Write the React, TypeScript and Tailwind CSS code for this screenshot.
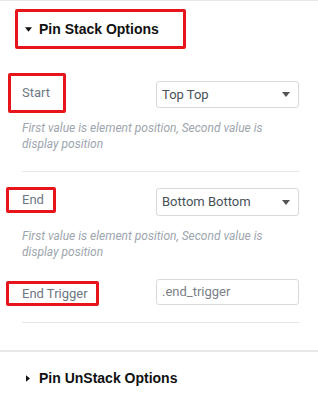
import React from "react";

const DownCaret = ({ className }: { className?: string }) => (
  <svg width="8" height="5" viewBox="0 0 8 5" className={className}>
    <path d="M0 0 L8 0 L4 5 Z" fill="currentColor" />
  </svg>
);

const RightCaret = ({ className }: { className?: string }) => (
  <svg width="5" height="8" viewBox="0 0 5 8" className={className}>
    <path d="M0 0 L5 4 L0 8 Z" fill="currentColor" />
  </svg>
);

export default function App() {
  return (
    <div className="w-[318px] h-[418px] bg-white border-t border-[#e6e8ea] font-['Roboto',sans-serif] overflow-hidden">
      {/* Heading */}
      <div className="pt-[8px] pl-[15px]">
        <div className="w-[171px] h-[40px] border-[3px] border-[#e8141c] rounded-[2px] flex items-center pl-[7px]">
          <DownCaret className="text-[#111] w-[7px] h-[5px]" />
          <span className="ml-[7px] font-['Liberation_Sans',Arial,sans-serif] font-bold text-[14px] text-[#111] leading-none">
            Pin Stack Options
          </span>
        </div>
      </div>

      {/* Start row */}
      <div className="mt-[24px] flex items-start pl-[8px] pr-[19px] justify-between">
        <div className="w-[58px] h-[40px] border-[3px] border-[#e8141c] rounded-[2px] flex items-center pl-[11px]">
          <span className="text-[13px] text-[#6d7882]">Start</span>
        </div>
        <div className="mt-[8px] w-[143px] h-[27px] border border-[#d5dadf] rounded-[3px] flex items-center justify-between pl-[5px] pr-[8px]">
          <span className="text-[13px] text-[#495157]">Top Top</span>
          <DownCaret className="text-[#555] w-[8px] h-[5px]" />
        </div>
      </div>
      <div className="mt-[7px] pl-[22px] pr-[30px] text-[12px] leading-[16px] italic text-[#9da5ae]">
        First value is element position, Second value is display position
      </div>

      <div className="mt-[19px] ml-[22px] mr-[18px] h-px bg-[#e6e9ec]" />

      {/* End row */}
      <div className="mt-[15px] flex items-start pl-[6px] pr-[19px] justify-between">
        <div className="w-[50px] h-[26px] border-[3px] border-[#e8141c] rounded-[2px] flex items-center pl-[13px]">
          <span className="text-[13px] text-[#6d7882]">End</span>
        </div>
        <div className="mt-[1px] w-[143px] h-[28px] border border-[#d5dadf] rounded-[3px] flex items-center justify-between pl-[5px] pr-[8px]">
          <span className="text-[13px] text-[#495157]">Bottom Bottom</span>
          <DownCaret className="text-[#555] w-[8px] h-[5px]" />
        </div>
      </div>
      <div className="mt-[12px] pl-[22px] pr-[30px] text-[12px] leading-[16px] italic text-[#9da5ae]">
        First value is element position, Second value is display position
      </div>

      {/* End Trigger row */}
      <div className="mt-[19px] flex items-start pl-[6px] pr-[19px] justify-between">
        <div className="mt-[2px] w-[93px] h-[25px] border-[3px] border-[#e8141c] rounded-[2px] flex items-center pl-[13px]">
          <span className="text-[13px] text-[#6d7882] whitespace-nowrap">End Trigger</span>
        </div>
        <div className="w-[143px] h-[26px] border border-[#d5dadf] rounded-[3px] flex items-center pl-[5px]">
          <span className="text-[13px] text-[#7a8087]">.end_trigger</span>
        </div>
      </div>

      <div className="mt-[16px] ml-[22px] mr-[18px] h-px bg-[#e6e9ec]" />

      <div className="mt-[27px] h-[2px] bg-[#e6e8ea]" />

      {/* UnStack heading */}
      <div className="h-[52px] flex items-center pl-[26px]">
        <RightCaret className="text-[#111] w-[4px] h-[7px]" />
        <span className="ml-[9px] font-['Liberation_Sans',Arial,sans-serif] font-bold text-[14px] text-[#111] leading-none">
          Pin UnStack Options
        </span>
      </div>
    </div>
  );
}
